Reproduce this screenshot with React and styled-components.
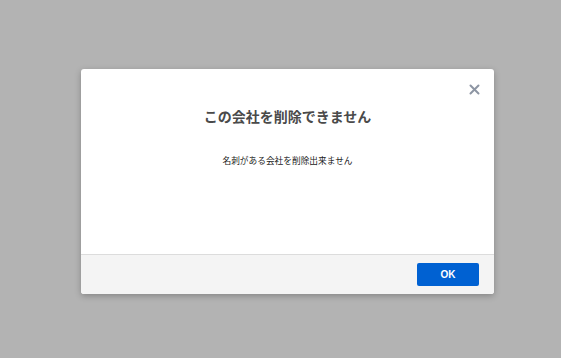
import React from "react";
import styled, { createGlobalStyle } from "styled-components";

const GlobalStyle = createGlobalStyle`
  html, body {
    margin: 0;
    padding: 0;
    background: #b3b3b3;
    font-family: "Noto Sans CJK JP", "Liberation Sans", sans-serif;
  }
`;

const Overlay = styled.div`
  width: 561px;
  height: 358px;
  display: flex;
  align-items: flex-start;
  justify-content: center;
  padding-top: 69px;
  box-sizing: border-box;
  background: #b3b3b3;
`;

const Modal = styled.div`
  width: 413px;
  height: 225px;
  margin-left: 14px;
  background: #fff;
  border-radius: 3px;
  box-shadow: 0 2px 6px rgba(0, 0, 0, 0.25);
  display: flex;
  flex-direction: column;
  position: relative;
  overflow: hidden;
`;

const Close = styled.button`
  position: absolute;
  top: 12px;
  right: 12px;
  width: 16px;
  height: 16px;
  padding: 0;
  border: none;
  background: none;
  display: flex;
  align-items: center;
  justify-content: center;
`;

const Body = styled.div`
  flex: 1;
  display: flex;
  flex-direction: column;
  align-items: center;
  padding-top: 36px;
`;

const Title = styled.h2`
  margin: 0;
  font-size: 14px;
  font-weight: 700;
  color: #4a4a4a;
  line-height: 22px;
`;

const Message = styled.p`
  margin: 27px 0 0;
  font-size: 8.7px;
  color: #222;
  line-height: 14px;
`;

const Footer = styled.div`
  height: 39px;
  border-top: 1px solid #dcdcdc;
  background: #f4f4f4;
  display: flex;
  align-items: center;
  justify-content: flex-end;
  padding-right: 15px;
`;

const OkButton = styled.button`
  width: 62px;
  height: 23px;
  border: none;
  border-radius: 2px;
  background: #0061d2;
  color: #fff;
  font-family: "Liberation Sans", sans-serif;
  font-size: 10px;
  font-weight: 700;
`;

export default function App() {
  return (
    <>
      <GlobalStyle />
      <Overlay>
        <Modal>
          <Close aria-label="close">
            <svg width="11" height="11" viewBox="0 0 11 11">
              <path d="M1.5 1.5 L9.5 9.5 M9.5 1.5 L1.5 9.5" stroke="#8d95a3" strokeWidth="2" strokeLinecap="round" />
            </svg>
          </Close>
          <Body>
            <Title>この会社を削除できません</Title>
            <Message>名刺がある会社を削除出来ません</Message>
          </Body>
          <Footer>
            <OkButton>OK</OkButton>
          </Footer>
        </Modal>
      </Overlay>
    </>
  );
}
